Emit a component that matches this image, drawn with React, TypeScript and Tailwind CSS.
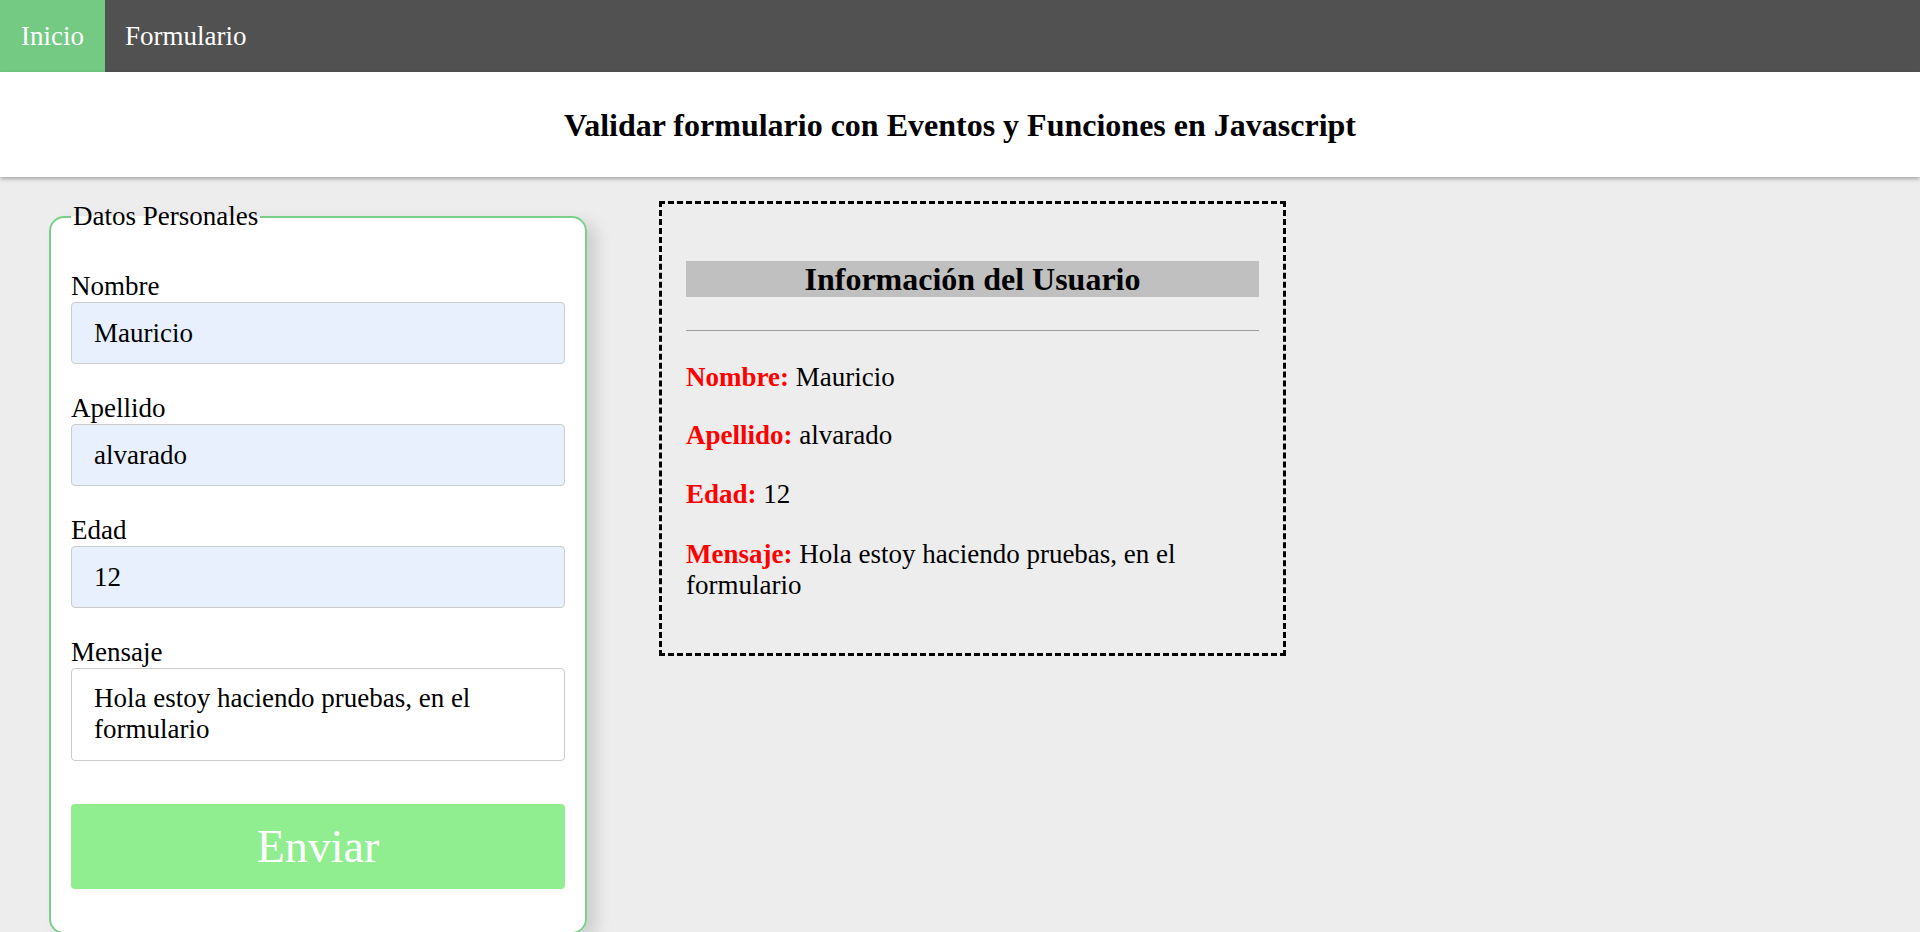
import { useState } from "react";

const fields = [
  { id: "nombre", label: "Nombre", value: "Mauricio" },
  { id: "apellido", label: "Apellido", value: "alvarado" },
  { id: "edad", label: "Edad", value: "12" },
];

function Nav() {
  return (
    <nav className="flex h-[72px] bg-[#515151] text-[27px] text-white">
      <a href="#" className="flex items-center bg-[#74c983] px-[21px]">
        Inicio
      </a>
      <a href="#" className="flex items-center px-[20px]">
        Formulario
      </a>
    </nav>
  );
}

export default function App() {
  const [data, setData] = useState({
    nombre: "Mauricio",
    apellido: "alvarado",
    edad: "12",
    mensaje: "Hola estoy haciendo pruebas, en el formulario",
  });

  return (
    <div className="min-h-screen bg-[#ededed] font-['Liberation_Serif',serif] text-black">
      <Nav />
      <header className="relative flex h-[105px] items-center justify-center bg-white shadow-[0_2px_4px_rgba(0,0,0,0.3)]">
        <h2 className="text-[32px] font-bold">Validar formulario con Eventos y Funciones en Javascript</h2>
      </header>

      <main className="flex items-start gap-[72px] px-[49px] pt-[24px]">
        <fieldset className="w-[538px] rounded-[15px] border-2 border-[#79cf87] bg-white px-[20px] pb-[43px] pt-[39px] shadow-[10px_6px_16px_rgba(0,0,0,0.13)]">
          <legend className="px-[2px] text-[27px] leading-[31px]">Datos Personales</legend>
          {fields.map((f) => (
            <div key={f.id} className="mb-[29px]">
              <label htmlFor={f.id} className="block text-[27px] leading-[31px]">
                {f.label}
              </label>
              <input
                id={f.id}
                value={data[f.id as "nombre"]}
                onChange={(e) => setData({ ...data, [f.id]: e.target.value })}
                className="block h-[62px] w-full rounded-[4px] border border-[#cccccc] bg-[#e8f0fe] px-[22px] text-[27px] outline-none"
              />
            </div>
          ))}
          <label htmlFor="mensaje" className="block text-[27px] leading-[31px]">
            Mensaje
          </label>
          <textarea
            id="mensaje"
            value={data.mensaje}
            onChange={(e) => setData({ ...data, mensaje: e.target.value })}
            className="block h-[93px] w-full resize-none rounded-[4px] border border-[#cccccc] bg-white px-[22px] py-[14px] text-[27px] leading-[31px] outline-none"
          />
          <button
            type="button"
            className="mt-[43px] h-[85px] w-full rounded-[4px] bg-[#90ee90] text-[46px] text-white"
          >
            Enviar
          </button>
        </fieldset>

        <section className="w-[627px] border-[3px] border-dashed border-black px-[24px] pb-[52px] pt-[24px]">
          <h2 className="mt-[33px] bg-[#c0c0c0] text-center text-[32px] font-bold leading-[36px]">
            Información del Usuario
          </h2>
          <hr className="mt-[33px] border-t border-[#9a9a9a]" />
          <div className="text-[27px] leading-[31px]">
            <p className="mt-[31px]">
              <b className="text-[#ff0000]">Nombre:</b> {data.nombre}
            </p>
            <p className="mt-[27px]">
              <b className="text-[#ff0000]">Apellido:</b> {data.apellido}
            </p>
            <p className="mt-[28px]">
              <b className="text-[#ff0000]">Edad:</b> {data.edad}
            </p>
            <p className="mt-[29px]">
              <b className="text-[#ff0000]">Mensaje:</b> {data.mensaje}
            </p>
          </div>
        </section>
      </main>
    </div>
  );
}
